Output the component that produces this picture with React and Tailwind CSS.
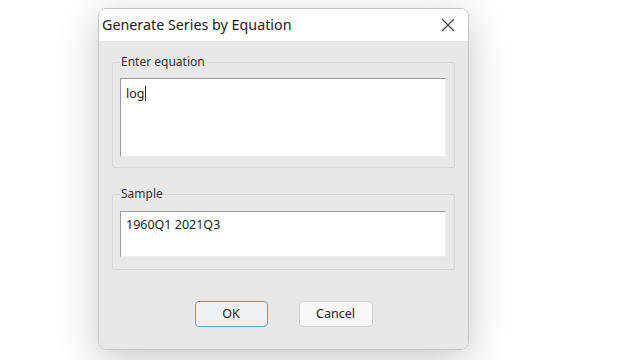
const FONT = { fontFamily: '"Noto Sans", "Open Sans", sans-serif' };

function GroupBox({ label, children, className = '' }) {
  return (
    <fieldset className={`border border-[#d6d6d6] rounded-[2px] pl-[7px] pr-[8px] ${className}`}>
      <legend className="text-[12px] leading-[16px] text-[#333] px-[1px]">{label}</legend>
      {children}
    </fieldset>
  );
}

function SunkenBox({ className = '', children }) {
  return (
    <div
      className={`bg-white border-t-[#9c9c9c] border-l-[#9c9c9c] border-b-[#ececec] border-r-[#ececec] border-[1.5px] pl-[5px] text-[12.5px] leading-[16px] text-[#222] ${className}`}
    >
      {children}
    </div>
  );
}

export default function App() {
  return (
    <div className="w-[640px] h-[360px] bg-white pl-[98px] pt-[8px] overflow-hidden" style={FONT}>
      <div className="w-[371px] h-[342px] rounded-[8px] border border-[#c4c4c4] overflow-hidden flex flex-col shadow-[0_10px_40px_rgba(0,0,0,0.22)]">
        {/* ── Title bar ── */}
        <div className="h-[32px] bg-white flex items-center justify-between pl-[3px] pr-[13px] shrink-0">
          <span className="text-[14.3px] text-[#1b1b1b]">Generate Series by Equation</span>
          <svg width="14" height="14" viewBox="0 0 14 14" className="text-[#444]">
            <path d="M1 1 L13 13 M13 1 L1 13" stroke="currentColor" strokeWidth="1.2" fill="none" />
          </svg>
        </div>

        {/* ── Body ── */}
        <div className="flex-1 bg-[#e8e8e8] pt-[13px] px-[13px] flex flex-col">
          <GroupBox label="Enter equation" className="pb-[10px]">
            <SunkenBox className="mt-[8px] h-[79px] pt-[7px]">
              log<span className="inline-block w-px h-[15px] bg-[#222] align-[-3px] ml-[1px]" />
            </SunkenBox>
          </GroupBox>

          <GroupBox label="Sample" className="mt-[18px] pb-[12px]">
            <SunkenBox className="mt-[9px] h-[46px] pt-[5px]">1960Q1 2021Q3</SunkenBox>
          </GroupBox>

          <div className="flex justify-center gap-[31px] mt-[31px]">
            <button className="w-[73px] h-[26px] rounded-[4px] border border-[#6d9bc3] bg-[#eef0f3] text-[12.5px] text-[#222]">
              OK
            </button>
            <button className="w-[74px] h-[26px] rounded-[4px] border border-[#d2d2d2] bg-[#f8f8f8] text-[12.5px] text-[#222]">
              Cancel
            </button>
          </div>
        </div>
      </div>
    </div>
  );
}
